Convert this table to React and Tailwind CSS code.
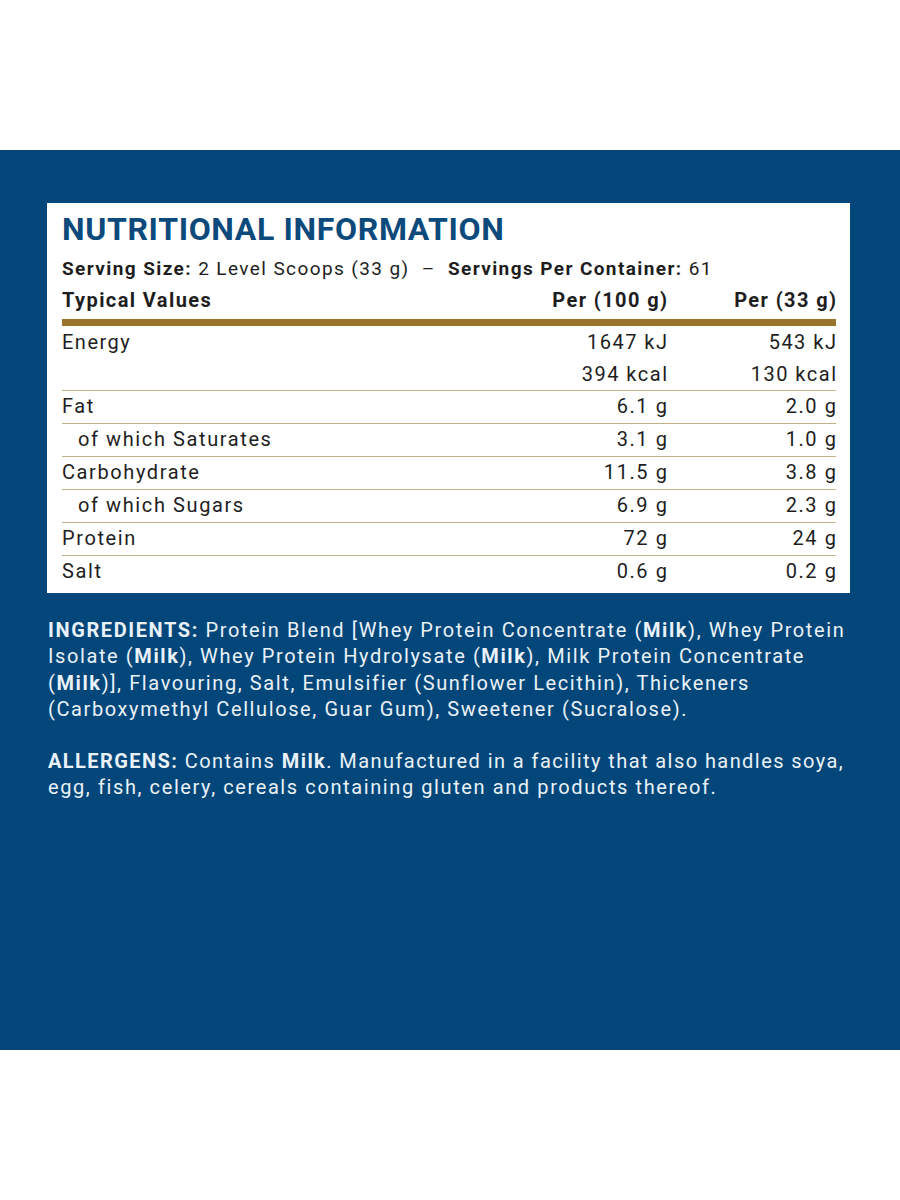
import React from "react";

const rows = [
  { label: "Fat", a: "6.1 g", b: "2.0 g" },
  { label: "of which Saturates", a: "3.1 g", b: "1.0 g", indent: true },
  { label: "Carbohydrate", a: "11.5 g", b: "3.8 g" },
  { label: "of which Sugars", a: "6.9 g", b: "2.3 g", indent: true },
  { label: "Protein", a: "72 g", b: "24 g" },
  { label: "Salt", a: "0.6 g", b: "0.2 g" },
];

export default function App() {
  return (
    <div className="w-[900px] h-[1200px] bg-white flex flex-col font-['Roboto','Liberation_Sans',sans-serif]">
      <div className="h-[150px] bg-white" />
      <div className="h-[900px] bg-[#03477a] pt-[53px] pl-[47px] pr-[50px]">
        <div className="bg-white h-[390px] pl-[15px] pr-[14px] text-[#1e1e1e] flex flex-col">
          <h1 className="h-[53px] text-[32px] leading-[53px] font-bold text-[#0d4a7c] tracking-[0.65px] whitespace-nowrap">
            NUTRITIONAL INFORMATION
          </h1>
          <div className="h-[25px] text-[19px] leading-[25px] tracking-[1.4px] whitespace-nowrap">
            <span className="font-bold">Serving Size:</span> 2 Level Scoops (33 g)&nbsp; –&nbsp; <span className="font-bold">Servings Per Container:</span> 61
          </div>
          <div className="grid grid-cols-[1fr_150px_169px] text-[20px] leading-[38px] font-bold h-[38px] tracking-[1.4px] whitespace-nowrap">
            <div>Typical Values</div>
            <div className="text-right mr-[-1.4px]">Per (100 g)</div>
            <div className="text-right mr-[-1.4px]">Per (33 g)</div>
          </div>
          <div className="h-[7px] bg-[#9b742b]" />
          <div className="grid grid-cols-[1fr_150px_169px] text-[20px] leading-[32px] h-[64px] tracking-[1.5px] whitespace-nowrap">
            <div>Energy</div>
            <div className="text-right flex flex-col mr-[-1.5px]">
              <span>1647 kJ</span>
              <span>394 kcal</span>
            </div>
            <div className="text-right flex flex-col mr-[-1.5px]">
              <span>543 kJ</span>
              <span>130 kcal</span>
            </div>
          </div>
          {rows.map((r) => (
            <div
              key={r.label}
              className="grid grid-cols-[1fr_150px_169px] text-[20px] leading-[31px] h-[33px] border-t-[1.5px] border-[#c4b088] tracking-[1.6px] whitespace-nowrap"
            >
              <div className={r.indent ? "pl-[16px]" : ""}>{r.label}</div>
              <div className="text-right mr-[-1.6px]">{r.a}</div>
              <div className="text-right mr-[-1.6px]">{r.b}</div>
            </div>
          ))}
        </div>
        <div className="mt-[24px] text-[20px] leading-[26.3px] text-[#eaf1f8] pl-[1px] tracking-[1.6px] whitespace-nowrap">
          <p>
            <b className="font-bold">INGREDIENTS:</b> Protein Blend [Whey Protein Concentrate (<b className="font-bold">Milk</b>), Whey Protein
            <br />
            Isolate (<b className="font-bold">Milk</b>), Whey Protein Hydrolysate (<b className="font-bold">Milk</b>), Milk Protein Concentrate
            <br />
            (<b className="font-bold">Milk</b>)], Flavouring, Salt, Emulsifier (Sunflower Lecithin), Thickeners
            <br />
            (Carboxymethyl Cellulose, Guar Gum), Sweetener (Sucralose).
          </p>
          <p className="mt-[25.7px]">
            <span className="tracking-[1.43px]">
              <b className="font-bold">ALLERGENS:</b> Contains <b className="font-bold">Milk</b>. Manufactured in a facility that also handles soya,
            </span>
            <br />
            egg, fish, celery, cereals containing gluten and products thereof.
          </p>
        </div>
      </div>
      <div className="h-[150px] bg-white" />
    </div>
  );
}
